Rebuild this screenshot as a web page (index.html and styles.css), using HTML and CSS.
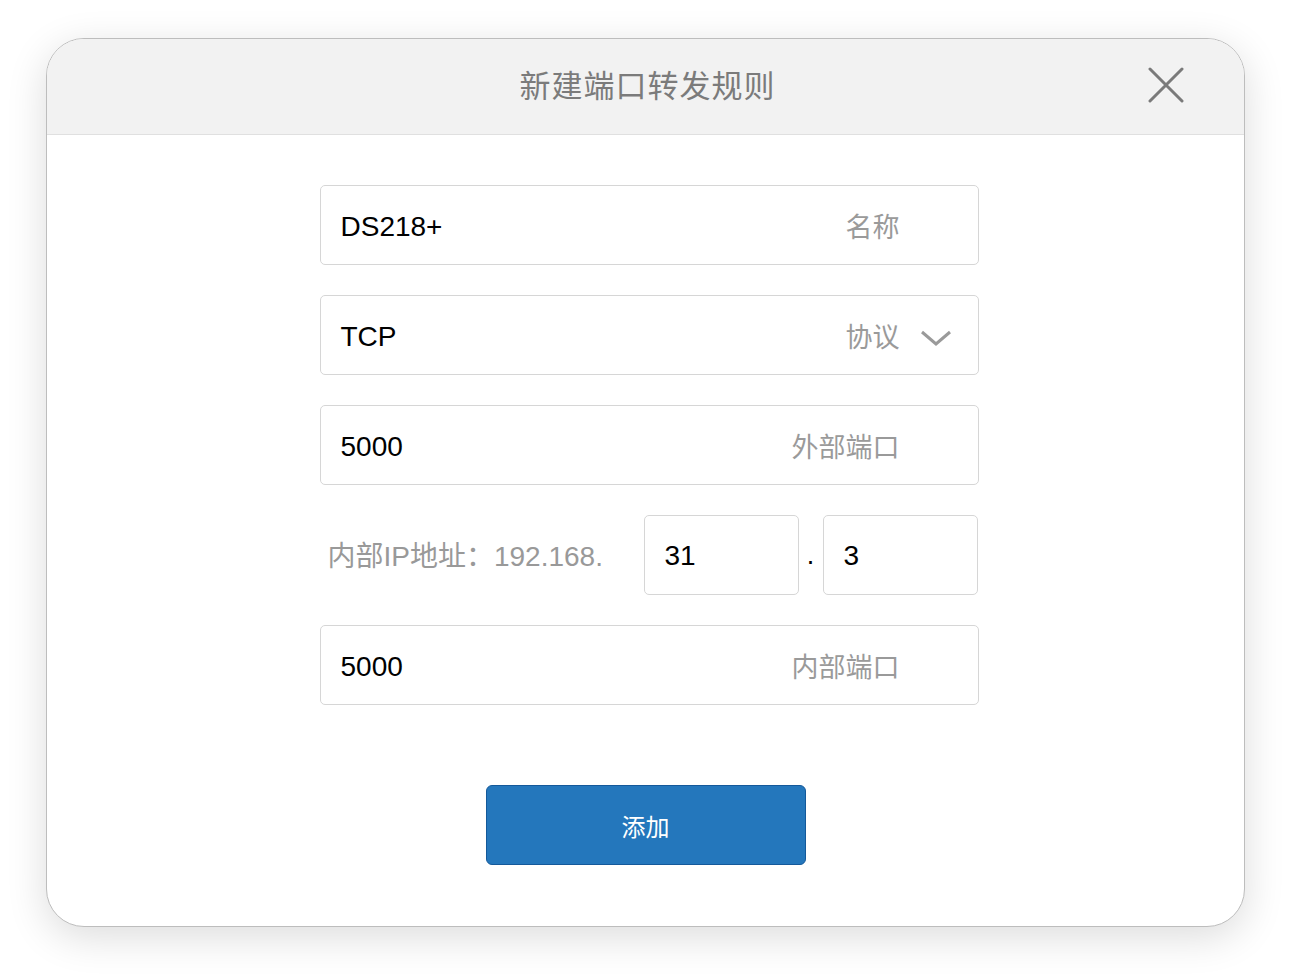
FILE: index.html
```html
<!DOCTYPE html>
<html lang="zh-CN">
<head>
    <meta charset="UTF-8">
    <title>新建端口转发规则</title>
    <link rel="stylesheet" href="styles.css">
</head>
<body>
    <div class="dialog">
        <div class="dialog-header">
            <div class="dialog-title">新建端口转发规则</div>
            <div class="close">
                <svg width="36" height="36" viewBox="0 0 36 36">
                    <path d="M2 2 L34 34 M34 2 L2 34" stroke="#7a7a7a" stroke-width="3" fill="none" stroke-linecap="round"/>
                </svg>
            </div>
        </div>
        <form class="dialog-body">
            <div class="field">
                <span class="value">DS218+</span>
                <span class="label">名称</span>
            </div>
            <div class="field field-select">
                <span class="value">TCP</span>
                <span class="label">协议</span>
                <svg class="chevron" width="32" height="18" viewBox="0 0 32 18">
                    <path d="M2 3 L16 15 L30 3" stroke="#9a9a9a" stroke-width="3" fill="none"/>
                </svg>
            </div>
            <div class="field">
                <span class="value">5000</span>
                <span class="label">外部端口</span>
            </div>
            <div class="ip-row">
                <span class="ip-label">内部IP地址：192.168.</span>
                <div class="ip-box">31</div>
                <span class="dot">.</span>
                <div class="ip-box">3</div>
            </div>
            <div class="field">
                <span class="value">5000</span>
                <span class="label">内部端口</span>
            </div>
            <div class="actions">
                <button type="button" class="btn">添加</button>
            </div>
        </form>
    </div>
</body>
</html>
```
FILE: styles.css
```css
body {
    margin: 0;
    padding: 38px 0 54px 46px;
    background: #fff;
    font-family: "Liberation Sans", Arial, "Noto Sans CJK SC", sans-serif;
}
.dialog {
    width: 1197px;
    height: 887px;
    border: 1.5px solid #bdbdbd;
    border-radius: 38px;
    background: #fff;
    overflow: hidden;
    box-shadow: 0 10px 40px rgba(0, 0, 0, 0.14);
}
.dialog-header {
    height: 95px;
    background: #f2f2f2;
    border-bottom: 1.5px solid #e0e0e0;
    display: flex;
    align-items: center;
    justify-content: center;
    position: relative;
}
.dialog-title {
    font-size: 31px;
    color: #7b7b7b;
    letter-spacing: 1px;
    margin-left: 4px;
    margin-top: -6px;
}
.close {
    position: absolute;
    right: 60px;
    top: 28px;
    width: 36px;
    height: 36px;
}
.dialog-body {
    display: flex;
    flex-direction: column;
    align-items: center;
    padding-top: 50px;
    gap: 30px;
}
.field {
    width: 659px;
    height: 80px;
    border: 1.5px solid #d6d6d6;
    border-radius: 5px;
    margin-left: 7px;
    display: flex;
    align-items: center;
    padding: 4px 78px 0 20px;
    box-sizing: border-box;
}
.field-select {
    padding-right: 26px;
}
.value {
    flex: 1;
    font-size: 28px;
    color: #000;
}
.label {
    font-size: 27px;
    color: #9a9a9a;
    margin-bottom: 4px;
}
.chevron {
    margin-left: 20px;
    margin-top: 2px;
}
.ip-row {
    width: 659px;
    height: 80px;
    margin-left: 7px;
    display: flex;
    align-items: center;
}
.ip-label {
    font-size: 28px;
    color: #999;
    margin-left: 8px;
    width: 316px;
    margin-bottom: 2px;
}
.ip-box {
    width: 155px;
    height: 80px;
    box-sizing: border-box;
    border: 1.5px solid #d6d6d6;
    border-radius: 5px;
    display: flex;
    align-items: center;
    padding: 2px 0 0 20px;
    font-size: 28px;
    color: #000;
}
.dot {
    width: 24px;
    text-align: center;
    font-size: 27px;
    margin-top: 0;
}
.actions {
    margin-top: 50px;
}
.btn {
    width: 320px;
    height: 80px;
    background: #2477bc;
    border: 1.5px solid #14599a;
    border-radius: 6px;
    color: #fff;
    font-size: 24px;
    font-family: "Noto Sans CJK SC", sans-serif;
    margin-left: 0;
}
```
